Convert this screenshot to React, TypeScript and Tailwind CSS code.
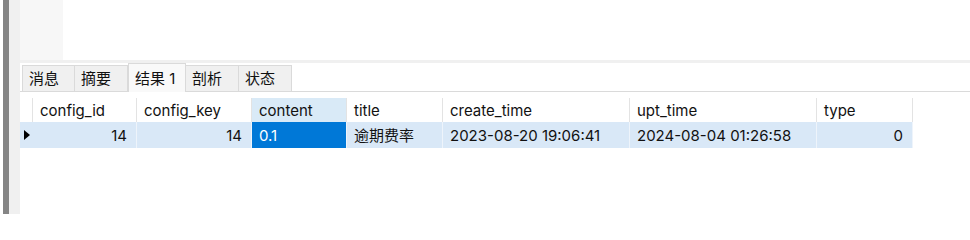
const columns = [
  { name: 'config_id', width: 104, value: '14', align: 'right' },
  { name: 'config_key', width: 115, value: '14', align: 'right' },
  { name: 'content', width: 95, value: '0.1', align: 'left', selected: true },
  { name: 'title', width: 96, value: '逾期费率', align: 'left' },
  { name: 'create_time', width: 187, value: '2023-08-20 19:06:41', align: 'left' },
  { name: 'upt_time', width: 187, value: '2024-08-04 01:26:58', align: 'left' },
  { name: 'type', width: 96, value: '0', align: 'right' },
];

const tabs = ['消息', '摘要', '结果 1', '剖析', '状态'];

export default function App() {
  return (
    <div
      className="w-[970px] h-[214px] flex bg-white text-[15px] text-[#111] overflow-hidden"
      style={{ fontFamily: 'Inter, "Noto Sans CJK SC", sans-serif' }}
    >
      <div className="w-[3px] bg-white" />
      <div className="w-[6px] bg-[#858585]" />
      <div className="w-[11px] bg-[#f0f0f0]" />

      <div className="flex-1 flex flex-col">
        <div className="h-[60px] flex">
          <div className="w-[43px] bg-[#f7f7f7]" />
          <div className="flex-1 bg-white" />
        </div>
        <div className="h-[3px] bg-[#f0f0f0]" />

        {/* tab bar */}
        <div className="h-[29px] flex items-end border-b border-[#dadada] pl-[2px]">
          {tabs.map((tab, i) => {
            const active = i === 2;
            return (
              <div
                key={tab}
                className={
                  active
                    ? 'h-[29px] w-[58px] px-[6px] flex items-center bg-[#f9f9f9] border border-b-0 border-[#dadada] -mb-px'
                    : 'h-[26px] w-[53px] px-[6px] flex items-center bg-[#f0f0f0] border-t border-r border-[#dadada] first:border-l'
                }
              >
                <span className="leading-none">{tab}</span>
              </div>
            );
          })}
        </div>

        <div className="h-[6px]" />

        {/* grid */}
        <div className="flex flex-col">
          <div className="flex h-[24px]">
            <div className="w-[13px] border-r border-[#e3e3e3]" />
            {columns.map(col => (
              <div
                key={col.name}
                style={{ width: col.width }}
                className={`px-[7px] pt-[2px] flex items-center border-r border-[#e3e3e3] ${
                  col.selected ? 'bg-[#d9eaf7]' : 'bg-white'
                }`}
              >
                {col.name}
              </div>
            ))}
          </div>
          <div className="flex h-[26px]">
            <div className="w-[13px] bg-[#d9e8f7] flex items-center pl-[4px]">
              <svg width="6" height="10" viewBox="0 0 6 10">
                <path d="M0 0 L6 5 L0 10 Z" fill="#000" />
              </svg>
            </div>
            {columns.map(col => (
              <div
                key={col.name}
                style={{ width: col.width }}
                className={`flex items-center pt-[2px] border-r border-[#eef4fb] ${
                  col.align === 'right' ? 'justify-end pr-[9px]' : 'pl-[7px]'
                } ${col.selected ? 'bg-[#0078d7] text-white' : 'bg-[#d9e8f7]'}`}
              >
                {col.value}
              </div>
            ))}
          </div>
        </div>
      </div>
    </div>
  );
}
